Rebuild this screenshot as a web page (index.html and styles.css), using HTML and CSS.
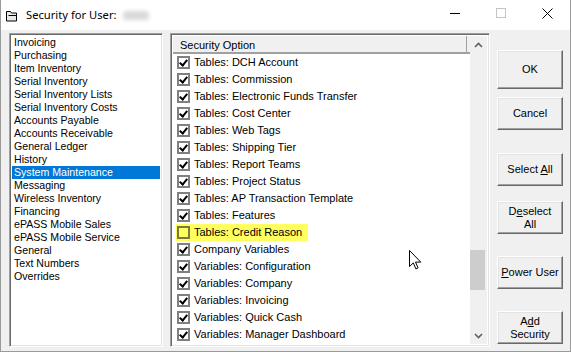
FILE: index.html
```html
<!DOCTYPE html>
<html>
<head>
<meta charset="utf-8">
<link rel="stylesheet" href="styles.css">
</head>
<body>
<div class="window">
  <div class="titlebar">
    <svg class="appicon" width="12" height="12" viewBox="0 0 12 12">
      <path d="M0.5 1.5h4l1 1.5h5v8h-10z" fill="#e8e8e8" stroke="#000" stroke-width="1"/>
      <path d="M2.5 5.5h8" stroke="#000" stroke-width="1"/>
    </svg>
    <span class="title">Security for User:</span>
    <span class="redact"></span>
    <div class="caption">
      <span class="cbtn"><svg width="10" height="10" viewBox="0 0 10 10"><path d="M0 5.5h10" stroke="#000" stroke-width="1"/></svg></span>
      <span class="cbtn"><svg width="10" height="10" viewBox="0 0 10 10"><rect x="0.5" y="0.5" width="9" height="9" fill="none" stroke="#c4c4c4" stroke-width="1"/></svg></span>
      <span class="cbtn"><svg width="11" height="11" viewBox="0 0 11 11"><path d="M0.5 0.5l10 10M10.5 0.5l-10 10" stroke="#000" stroke-width="1"/></svg></span>
    </div>
  </div>
  <div class="client">
    <div class="listbox">
      <div class="li">Invoicing</div>
      <div class="li">Purchasing</div>
      <div class="li">Item Inventory</div>
      <div class="li">Serial Inventory</div>
      <div class="li">Serial Inventory Lists</div>
      <div class="li">Serial Inventory Costs</div>
      <div class="li">Accounts Payable</div>
      <div class="li">Accounts Receivable</div>
      <div class="li">General Ledger</div>
      <div class="li">History</div>
      <div class="li sel">System Maintenance</div>
      <div class="li">Messaging</div>
      <div class="li">Wireless Inventory</div>
      <div class="li">Financing</div>
      <div class="li">ePASS Mobile Sales</div>
      <div class="li">ePASS Mobile Service</div>
      <div class="li">General</div>
      <div class="li">Text Numbers</div>
      <div class="li">Overrides</div>
    </div>
    <div class="listview">
      <div class="lv-main">
        <div class="lv-header"><div class="hcell">Security Option</div></div>
        <div class="rows">
          <div class="row"><span class="cb on"></span><span class="rt">Tables: DCH Account</span></div>
          <div class="row"><span class="cb on"></span><span class="rt">Tables: Commission</span></div>
          <div class="row"><span class="cb on"></span><span class="rt">Tables: Electronic Funds Transfer</span></div>
          <div class="row"><span class="cb on"></span><span class="rt">Tables: Cost Center</span></div>
          <div class="row"><span class="cb on"></span><span class="rt">Tables: Web Tags</span></div>
          <div class="row"><span class="cb on"></span><span class="rt">Tables: Shipping Tier</span></div>
          <div class="row"><span class="cb on"></span><span class="rt">Tables: Report Teams</span></div>
          <div class="row"><span class="cb on"></span><span class="rt">Tables: Project Status</span></div>
          <div class="row"><span class="cb on"></span><span class="rt">Tables: AP Transaction Template</span></div>
          <div class="row"><span class="cb on"></span><span class="rt">Tables: Features</span></div>
          <div class="row"><span class="hl"><span class="cb off"></span><span class="rt">Tables: Credit Reason</span></span></div>
          <div class="row"><span class="cb on"></span><span class="rt">Company Variables</span></div>
          <div class="row"><span class="cb on"></span><span class="rt">Variables: Configuration</span></div>
          <div class="row"><span class="cb on"></span><span class="rt">Variables: Company</span></div>
          <div class="row"><span class="cb on"></span><span class="rt">Variables: Invoicing</span></div>
          <div class="row"><span class="cb on"></span><span class="rt">Variables: Quick Cash</span></div>
          <div class="row"><span class="cb on"></span><span class="rt">Variables: Manager Dashboard</span></div>
        </div>
      </div>
      <div class="vscroll">
        <div class="sarrow"><svg width="9" height="6" viewBox="0 0 9 6"><path d="M1 5l3.5-3.5L8 5" fill="none" stroke="#606060" stroke-width="1.6"/></svg></div>
        <div class="track"><div class="thumb"></div></div>
        <div class="sarrow"><svg width="9" height="6" viewBox="0 0 9 6"><path d="M1 1l3.5 3.5L8 1" fill="none" stroke="#606060" stroke-width="1.6"/></svg></div>
      </div>
      <svg class="cursor" width="13" height="20" viewBox="0 0 13 20">
        <path d="M0.5 0.5v16l3.8-3.6 2.6 6 2.2-1-2.6-5.8h5.3z" fill="#fff" stroke="#000" stroke-width="1"/>
      </svg>
    </div>
    <div class="buttons">
      <div class="btn def b-ok"><span>OK</span></div>
      <div class="btn b-cancel"><span>Cancel</span></div>
      <div class="btn b-sel"><span>Select <u>A</u>ll</span></div>
      <div class="btn b-desel"><span>D<u>e</u>select<br>All</span></div>
      <div class="btn b-power"><span><u>P</u>ower User</span></div>
      <div class="btn b-add"><span>A<u>d</u>d<br>Security</span></div>
    </div>
  </div>
</div>
</body>
</html>
```

FILE: styles.css
```css
* { box-sizing: border-box; }
html, body { margin: 0; padding: 0; }
body {
  width: 571px;
  height: 352px;
  overflow: hidden;
  background: #f0f0f0;
  font-family: "Liberation Sans", Arial, sans-serif;
  color: #000;
}
.window {
  width: 571px;
  height: 352px;
  display: flex;
  flex-direction: column;
  border: 1px solid #9a9a9a;
  border-top: none;
  background: #f0f0f0;
}
.titlebar {
  height: 30px;
  flex: none;
  background: #fff;
  display: flex;
  align-items: center;
  padding-left: 5px;
}
.appicon { flex: none; margin-top: 1px; }
.title {
  font-family: "Noto Sans", "Open Sans", sans-serif;
  font-size: 11.2px;
  margin-left: 8px;
  margin-top: -2px;
}
.redact {
  width: 26px;
  height: 9px;
  margin-left: 6px;
  background: #d8d8d8;
  filter: blur(2px);
  border-radius: 4px;
}
.caption { margin-left: auto; display: flex; height: 30px; }
.cbtn {
  width: 46px;
  height: 30px;
  display: flex;
  align-items: center;
  justify-content: center;
  padding-bottom: 4px;
}
.client {
  flex: 1;
  display: flex;
  padding: 3px 7px 4px 8px;
}
.listbox {
  flex: none;
  width: 154px;
  margin-right: 7px;
  background: #fff;
  border: 1px solid;
  border-color: #a0a0a0 #fff #fff #a0a0a0;
  box-shadow: inset 1px 1px 0 #696969, inset -1px -1px 0 #e3e3e3;
  padding: 2px 2px;
  font-size: 10.6px;
}
.li {
  height: 13px;
  line-height: 13px;
  padding-left: 2px;
  white-space: nowrap;
}
.li.sel { background: #0078d7; color: #fff; }
.listview {
  flex: none;
  position: relative;
  width: 320px;
  display: flex;
  background: #fff;
  border: 1px solid;
  border-color: #a0a0a0 #fff #fff #a0a0a0;
  box-shadow: inset 1px 1px 0 #696969, inset -1px -1px 0 #e3e3e3;
  padding: 2px;
}
.lv-main { flex: 1; display: flex; flex-direction: column; min-width: 0; }
.lv-header {
  height: 18px;
  flex: none;
  display: flex;
  background: #f0f0f0;
  border-bottom: 2px solid #a0a0a0;
}
.hcell {
  flex: 1;
  font-size: 11px;
  line-height: 16px;
  padding-left: 7px;
  padding-top: 1px;
  border-right: 1px solid #a0a0a0;
  margin-right: 3px;
}
.rows { flex: 1; overflow: hidden; }
.row {
  height: 17px;
  display: flex;
  align-items: center;
  padding-left: 4px;
  font-size: 11px;
  white-space: nowrap;
}
.hl {
  display: flex;
  align-items: center;
  height: 17px;
  background: #ffff60;
  padding-right: 6px;
  margin-left: -1px;
  padding-left: 1px;
}
.cb {
  width: 13px;
  height: 13px;
  flex: none;
  border: 2px solid #808080;
  background: #fff;
  position: relative;
  margin-right: 4px;
}
.cb.on::after {
  content: "";
  position: absolute;
  left: 1px;
  top: 0px;
  width: 3px;
  height: 6px;
  border: solid #000;
  border-width: 0 2px 2px 0;
  transform: translate(1px, 0) rotate(40deg);
}
.cb.off { background: #ffff60; border-color: #7a7a40; }
.rt { line-height: 17px; }
.vscroll {
  width: 17px;
  flex: none;
  background: #f0f0f0;
  display: flex;
  flex-direction: column;
}
.sarrow {
  height: 17px;
  display: flex;
  align-items: center;
  justify-content: center;
}
.track { flex: 1; display: flex; flex-direction: column; }
.thumb {
  margin-top: 197px;
  height: 40px;
  width: 15px;
  background: #cdcdcd;
}
.cursor { position: absolute; left: 238px; top: 216px; }
.buttons {
  flex: none;
  width: 66px;
  margin-left: 7px;
  display: flex;
  flex-direction: column;
  font-size: 11px;
  padding-top: 17px;
}
.btn {
  flex: none;
  background: #f0f0f0;
  border: 1px solid;
  border-color: #fff #696969 #696969 #fff;
  box-shadow: inset -1px -1px 0 #a0a0a0, inset 1px 1px 0 #e3e3e3;
  display: flex;
  align-items: center;
  justify-content: center;
  text-align: center;
  line-height: 13px;
}
.btn span { display: block; }
.b-ok { height: 39px; }
.b-cancel { height: 33px; margin-top: 8px; }
.b-sel { height: 33px; margin-top: 23px; }
.b-desel { height: 33px; margin-top: 15px; }
.b-power { height: 33px; margin-top: 22px; }
.b-add { height: 33px; margin-top: 22px; }
```
